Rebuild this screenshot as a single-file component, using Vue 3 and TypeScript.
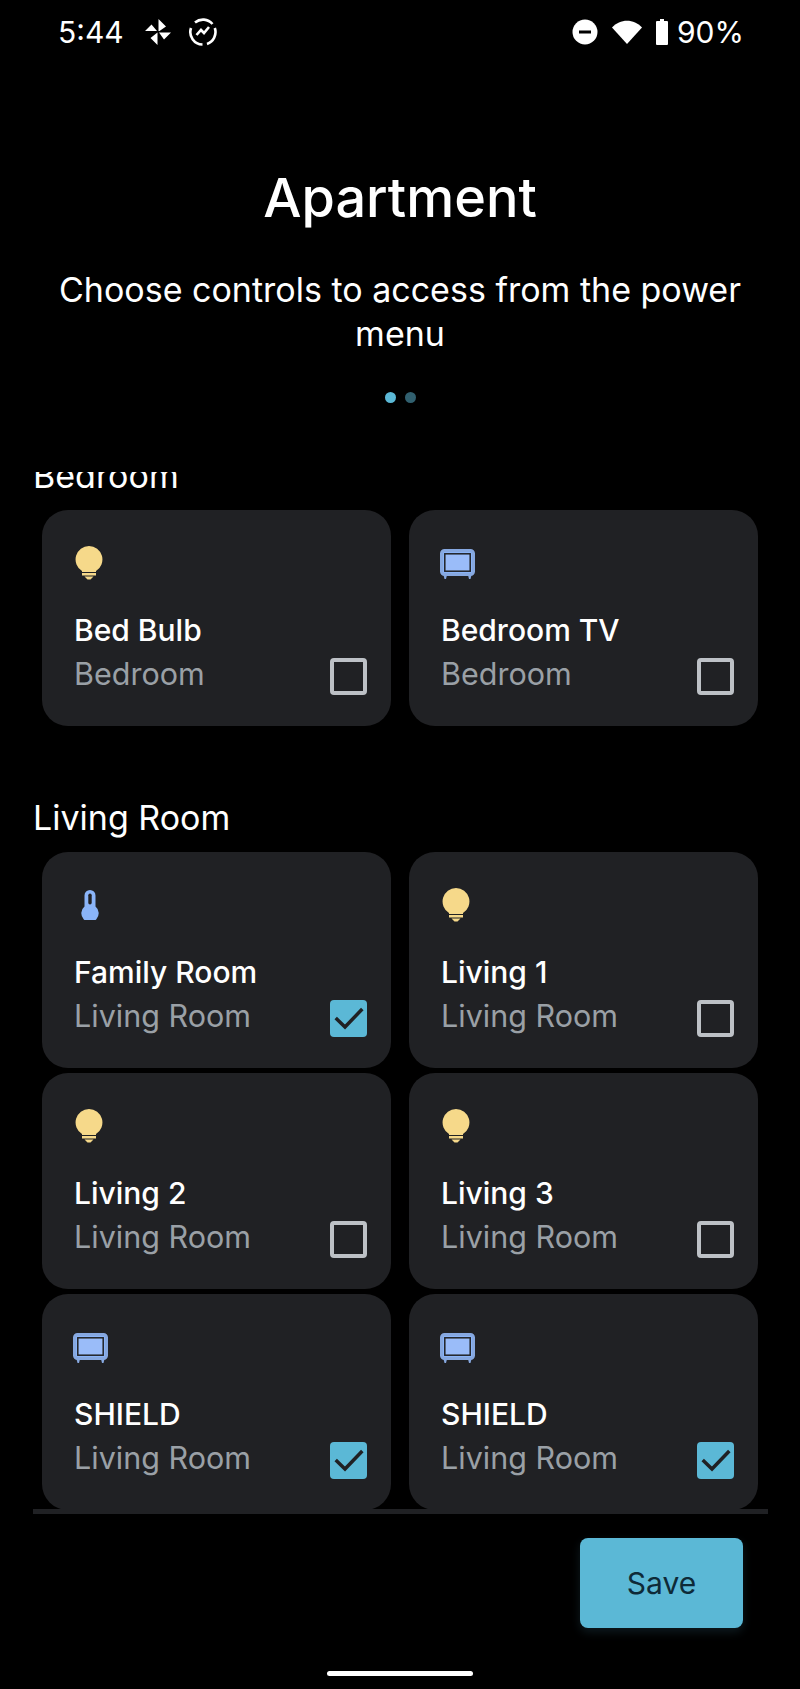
<script setup lang="ts">
type Kind = 'bulb' | 'tv' | 'thermo'

interface Control {
  name: string
  kind: Kind
  checked: boolean
}

interface Group {
  room: string
  controls: Control[]
}

const groups: Group[] = [
  {
    room: 'Bedroom',
    controls: [
      { name: 'Bed Bulb', kind: 'bulb', checked: false },
      { name: 'Bedroom TV', kind: 'tv', checked: false },
    ],
  },
  {
    room: 'Living Room',
    controls: [
      { name: 'Family Room', kind: 'thermo', checked: true },
      { name: 'Living 1', kind: 'bulb', checked: false },
      { name: 'Living 2', kind: 'bulb', checked: false },
      { name: 'Living 3', kind: 'bulb', checked: false },
      { name: 'SHIELD', kind: 'tv', checked: true },
      { name: 'SHIELD', kind: 'tv', checked: true },
    ],
  },
]
</script>

<template>
  <div class="page">
    <div class="status">
      <span class="clock">5:44</span>
      <svg width="26" height="26" viewBox="0 0 26 26">
        <path d="M13.500 0l7.500 7.500-6.500 4.500h-1zM26 13.500l-7 7-5-7zM12.500 26l-7-7 7-5.500zM0 12l6.500-6.500 5.500 6.500z" fill="#fff" />
      </svg>
      <svg class="trend" width="30" height="30" viewBox="0 0 30 30" fill="none" stroke="#fff" stroke-width="2.600">
        <path d="M7 5.500A12.500 12.500 0 0 1 24.500 7M26.800 11A12.500 12.500 0 0 1 19 26.900M14.500 27.500A12.500 12.500 0 0 1 3 11" />
        <path d="M8.500 18l4.500-5 3 3 5-6" />
      </svg>
      <span class="grow"></span>
      <svg width="26" height="26" viewBox="0 0 26 26">
        <circle cx="13" cy="13" r="12.500" fill="#fff" />
        <rect x="7" y="11.500" width="12" height="3" fill="#000" />
      </svg>
      <svg class="wifi" width="30" height="24" viewBox="0 0 30 24">
        <path d="M0 7.500C8 -1.500 22 -1.500 30 7.500L15 24z" fill="#fff" />
      </svg>
      <svg class="battery" width="12" height="26" viewBox="0 0 12 26">
        <path d="M4 0h4v2h3a1 1 0 0 1 1 1v22a1 1 0 0 1-1 1H1a1 1 0 0 1-1-1V3a1 1 0 0 1 1-1h3z" fill="#fff" />
      </svg>
      <span class="percent">90%</span>
    </div>

    <header class="head">
      <h1>Apartment</h1>
      <p>Choose controls to access from the power menu</p>
      <div class="dots">
        <span class="dot on"></span>
        <span class="dot"></span>
      </div>
    </header>

    <main class="list">
      <div class="list-inner">
        <section v-for="group in groups" :key="group.room" class="group">
          <h2>{{ group.room }}</h2>
          <div class="grid">
            <article v-for="(item, i) in group.controls" :key="i" class="card">
              <div class="icon">
                <svg v-if="item.kind === 'bulb'" class="bulb" width="28" height="34" viewBox="0 0 28 34">
                  <path d="M14 0a13.500 13.500 0 0 0-7 25v1h14v-1A13.500 13.500 0 0 0 14 0z" fill="#f6d98a" />
                  <rect x="7" y="27" width="14" height="2.500" fill="#f6d98a" />
                  <path d="M9.500 30.500h9l-3 3h-3z" fill="#f6d98a" />
                </svg>
                <svg v-else-if="item.kind === 'tv'" class="tv" width="35" height="30" viewBox="0 0 35 30">
                  <rect x="1.500" y="1.500" width="32" height="24" rx="3" fill="#8ab4f8" stroke="#86a8e0" stroke-width="3" />
                  <rect x="4.800" y="4.800" width="25.400" height="17.400" fill="#9abcf9" stroke="#202124" stroke-width="1.500" />
                  <path d="M3.500 26h3.500l-1 4h-1.500zM28 26h3.500l-1 4h-1.500z" fill="#86a8e0" />
                </svg>
                <svg v-else class="thermo" width="30" height="30" viewBox="0 0 30 30">
                  <path d="M9.500 5.500a5.500 5.500 0 0 1 11 0v11a8.700 8.700 0 1 1-11 0z" fill="#8ab4f8" />
                  <rect x="13.300" y="3.500" width="3.400" height="11" rx="1.700" fill="#202124" />
                </svg>
              </div>
              <div class="info">
                <div class="labels">
                  <div class="name">{{ item.name }}</div>
                  <div class="room">{{ group.room }}</div>
                </div>
                <span class="box" :class="{ checked: item.checked }">
                  <svg v-if="item.checked" width="37" height="37" viewBox="0 0 37 37" fill="none">
                    <path d="M5.700 18l9.300 9L32.300 9" stroke="#202124" stroke-width="3.500" />
                  </svg>
                </span>
              </div>
            </article>
          </div>
        </section>
      </div>
    </main>

    <footer class="foot">
      <button type="button" class="save">Save</button>
    </footer>

    <div class="home"></div>
  </div>
</template>

<style>
html,
body {
  background: #000;
}
</style>

<style scoped>
.page {
  width: 800px;
  height: 1689px;
  background: #000;
  color: #fff;
  font-family: Inter, "Noto Sans", sans-serif;
  display: flex;
  flex-direction: column;
  overflow: hidden;
}

.status {
  height: 64px;
  padding: 0 56px 0 58px;
  display: flex;
  align-items: center;
  font-size: 30px;
  box-sizing: border-box;
}

.clock {
  width: 87px;
}

.trend {
  margin-left: 17px;
}

.grow {
  flex: 1;
}

.wifi {
  margin-left: 14px;
}

.battery {
  margin-left: 14px;
}

.percent {
  margin-left: 9px;
}

.head {
  text-align: center;
  padding: 98px 40px 0;
}

.head h1 {
  margin: 0;
  font-size: 54px;
  line-height: 72px;
  font-weight: 500;
}

.head p {
  margin: 34px 0 0;
  font-size: 34px;
  line-height: 44px;
}

.dots {
  margin-top: 36px;
  display: flex;
  justify-content: center;
  gap: 9px;
}

.dot {
  width: 11px;
  height: 11px;
  border-radius: 50%;
  background: #31606f;
}

.dot.on {
  background: #5bb8d6;
}

.list {
  height: 1037px;
  margin: 69px 32px 0 33px;
  overflow: hidden;
}

.list-inner {
  margin-top: -24px;
}

.group + .group {
  margin-top: 64px;
}

.group h2 {
  margin: 0 0 6px;
  font-size: 34px;
  font-weight: 400;
  line-height: 56px;
}

.grid {
  padding: 0 9px;
  display: grid;
  grid-template-columns: 349px 349px;
  gap: 5px 18px;
}

.card {
  height: 216px;
  box-sizing: border-box;
  padding: 36px 24px 31px 32px;
  background: #202124;
  border-radius: 26px;
  display: flex;
  flex-direction: column;
  justify-content: space-between;
}

.icon {
  height: 36px;
  line-height: 0;
}

.bulb {
  margin-left: 1px;
}

.tv {
  margin: 3px 0 0 -1px;
}

.thermo {
  margin: 2px 0 0 1px;
}

.info {
  display: flex;
  justify-content: space-between;
  align-items: flex-end;
}

.name {
  font-size: 30px;
  line-height: 43px;
  font-weight: 450;
}

.room {
  font-size: 30.500px;
  line-height: 43px;
  color: #9aa0a6;
}

.box {
  width: 37px;
  height: 37px;
  box-sizing: border-box;
  border: 4px solid #bdc1c6;
  border-radius: 4px;
  display: flex;
  align-items: center;
  justify-content: center;
}

.box.checked {
  background: #5bb8d6;
  border: 0;
}

.foot {
  margin: 0 32px 0 33px;
  border-top: 5px solid #202124;
  display: flex;
  justify-content: flex-end;
  padding: 24px 25px 0 0;
}

.save {
  width: 163px;
  height: 90px;
  border: 0;
  border-radius: 8px;
  background: #5bb8d6;
  box-shadow: 0 4px 10px rgba(91, 184, 214, 0.15);
  color: #0e2a38;
  font-family: inherit;
  font-size: 30px;
}

.home {
  width: 146px;
  height: 5px;
  margin: 43px auto 0;
  border-radius: 3px;
  background: #fff;
}
</style>
